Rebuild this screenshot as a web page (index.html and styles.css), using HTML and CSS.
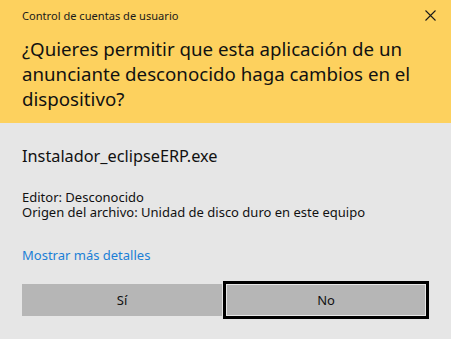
FILE: index.html
```html
<!DOCTYPE html>
<html lang="es">
<head>
<meta charset="utf-8">
<title>Control de cuentas de usuario</title>
<link rel="stylesheet" href="styles.css">
</head>
<body>
<div class="dialog">
  <header class="header">
    <div class="titlebar">
      <span class="title">Control de cuentas de usuario</span>
      <span class="close" aria-label="Cerrar">
        <svg width="11" height="11" viewBox="0 0 11 11"><path d="M0.5 0.5 L10.5 10.5 M10.5 0.5 L0.5 10.5" stroke="#1a1a1a" stroke-width="1.1" fill="none"/></svg>
      </span>
    </div>
    <h1 class="question">¿Quieres permitir que esta aplicación de un<br>anunciante desconocido haga cambios en el<br>dispositivo?</h1>
  </header>
  <main class="content">
    <div class="filename">Instalador_eclipseERP.exe</div>
    <div class="info">
      <div>Editor: Desconocido</div>
      <div>Origen del archivo: Unidad de disco duro en este equipo</div>
    </div>
    <a class="details" href="#">Mostrar más detalles</a>
    <div class="buttons">
      <button class="btn">Sí</button>
      <button class="btn btn-focus">No</button>
    </div>
  </main>
</div>
</body>
</html>
```
FILE: styles.css
```css
html, body {
  margin: 0;
  padding: 0;
}
body {
  width: 451px;
  height: 339px;
  background: #e6e6e6;
  font-family: "Noto Sans", "Open Sans", sans-serif;
  color: #000;
  overflow: hidden;
}
.dialog {
  display: flex;
  flex-direction: column;
  height: 339px;
}
.header {
  background: #fdd15e;
  height: 123px;
  box-sizing: border-box;
  padding: 5px 14px 0 22px;
}
.titlebar {
  display: flex;
  justify-content: space-between;
  align-items: center;
  height: 20px;
}
.title {
  font-size: 11.1px;
  color: #1a1a1a;
}
.close {
  display: flex;
  width: 12px;
  height: 12px;
  margin-top: 2px;
}
.question {
  margin: 11px 0 0 0;
  font-weight: normal;
  font-size: 18.7px;
  line-height: 25px;
  color: #111;
}
.content {
  padding: 0 22px;
}
.filename {
  margin-top: 22px;
  font-size: 16.3px;
  line-height: 22px;
  color: #111;
}
.info {
  margin-top: 23px;
  font-size: 13px;
  line-height: 15px;
  color: #111;
}
.info div {
  white-space: nowrap;
}
.details {
  display: block;
  width: max-content;
  margin-top: 27px;
  font-size: 13px;
  line-height: 16px;
  color: #1b7fd6;
  text-decoration: none;
}
.buttons {
  margin-top: 18px;
  display: flex;
  align-items: center;
  gap: 1px;
}
.btn {
  font-family: inherit;
  font-size: 13px;
  color: #111;
  background: #b6b6b6;
  border: none;
  width: 201px;
  height: 32px;
  padding: 0;
  margin: 0;
}
.btn-focus {
  width: 207px;
  height: 38px;
  border: 3px solid #000;
  box-shadow: inset 0 0 0 1px #e6e6e6;
}
```
